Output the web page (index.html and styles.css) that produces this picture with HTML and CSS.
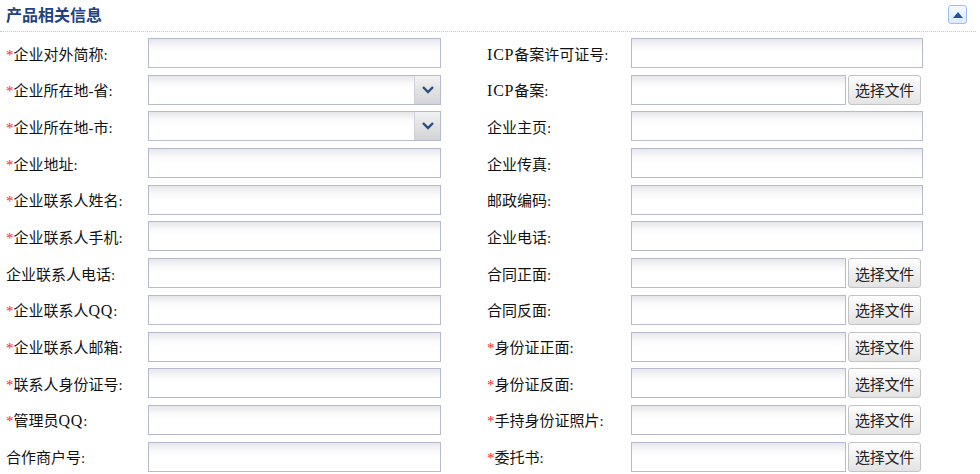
FILE: index.html
```html
<!DOCTYPE html>
<html lang="zh">
<head>
<meta charset="utf-8">
<link rel="stylesheet" href="styles.css">
</head>
<body>
<div class="panel">
  <div class="head">
    <span class="title">产品相关信息</span>
    <span class="toggle"><svg width="10" height="6" viewBox="0 0 10 6"><path d="M0 6 L5 0 L10 6 Z" fill="#1f55a8"/></svg></span>
  </div>
  <div class="form">
    <div class="cell"><label><i>*</i>企业对外简称:</label><div class="field"><span class="inp"></span></div></div>
    <div class="cell r"><label><b class="lat">ICP</b>备案许可证号:</label><div class="field"><span class="inp"></span></div></div>

    <div class="cell"><label><i>*</i>企业所在地-省:</label><div class="field"><span class="inp sel"><span class="arrow"><svg width="12" height="8" viewBox="0 0 12 8"><path d="M1 1 L6 6 L11 1" fill="none" stroke="#284d80" stroke-width="2.4"/></svg></span></span></div></div>
    <div class="cell r"><label><b class="lat">ICP</b>备案:</label><div class="field"><span class="inp file"></span><span class="btn">选择文件</span></div></div>

    <div class="cell"><label><i>*</i>企业所在地-市:</label><div class="field"><span class="inp sel"><span class="arrow"><svg width="12" height="8" viewBox="0 0 12 8"><path d="M1 1 L6 6 L11 1" fill="none" stroke="#284d80" stroke-width="2.4"/></svg></span></span></div></div>
    <div class="cell r"><label>企业主页:</label><div class="field"><span class="inp"></span></div></div>

    <div class="cell"><label><i>*</i>企业地址:</label><div class="field"><span class="inp"></span></div></div>
    <div class="cell r"><label>企业传真:</label><div class="field"><span class="inp"></span></div></div>

    <div class="cell"><label><i>*</i>企业联系人姓名:</label><div class="field"><span class="inp"></span></div></div>
    <div class="cell r"><label>邮政编码:</label><div class="field"><span class="inp"></span></div></div>

    <div class="cell"><label><i>*</i>企业联系人手机:</label><div class="field"><span class="inp"></span></div></div>
    <div class="cell r"><label>企业电话:</label><div class="field"><span class="inp"></span></div></div>

    <div class="cell"><label>企业联系人电话:</label><div class="field"><span class="inp"></span></div></div>
    <div class="cell r"><label>合同正面:</label><div class="field"><span class="inp file"></span><span class="btn">选择文件</span></div></div>

    <div class="cell"><label><i>*</i>企业联系人<b class="lat">QQ</b>:</label><div class="field"><span class="inp"></span></div></div>
    <div class="cell r"><label>合同反面:</label><div class="field"><span class="inp file"></span><span class="btn">选择文件</span></div></div>

    <div class="cell"><label><i>*</i>企业联系人邮箱:</label><div class="field"><span class="inp"></span></div></div>
    <div class="cell r"><label><i>*</i>身份证正面:</label><div class="field"><span class="inp file"></span><span class="btn">选择文件</span></div></div>

    <div class="cell"><label><i>*</i>联系人身份证号:</label><div class="field"><span class="inp"></span></div></div>
    <div class="cell r"><label><i>*</i>身份证反面:</label><div class="field"><span class="inp file"></span><span class="btn">选择文件</span></div></div>

    <div class="cell"><label><i>*</i>管理员<b class="lat">QQ</b>:</label><div class="field"><span class="inp"></span></div></div>
    <div class="cell r"><label><i>*</i>手持身份证照片:</label><div class="field"><span class="inp file"></span><span class="btn">选择文件</span></div></div>

    <div class="cell"><label>合作商户号:</label><div class="field"><span class="inp"></span></div></div>
    <div class="cell r"><label><i>*</i>委托书:</label><div class="field"><span class="inp file"></span><span class="btn">选择文件</span></div></div>
  </div>
</div>
</body>
</html>
```
FILE: styles.css
```css
html, body {
  margin: 0;
  padding: 0;
  background: #fff;
}
body {
  width: 980px;
  height: 474px;
  overflow: hidden;
  font-family: "Liberation Serif", "Noto Sans CJK SC", serif;
  font-size: 15px;
  color: #111;
}
.panel {
  width: 976px;
}
.head {
  height: 32px;
  border-bottom: 1px dotted #c8c8c8;
  display: flex;
  align-items: center;
  justify-content: space-between;
  padding: 0 9px 0 6px;
  box-sizing: border-box;
}
.title {
  font-family: "Noto Sans CJK SC", sans-serif;
  font-weight: bold;
  font-size: 16px;
  color: #22427f;
  margin-top: -3px;
}
.toggle {
  width: 19px;
  height: 19px;
  box-sizing: border-box;
  border: 1px solid #9cc0ee;
  border-radius: 3px;
  background: linear-gradient(#f4f9ff, #dcebfd);
  display: flex;
  align-items: center;
  justify-content: center;
  margin-top: -2px;
}
.form {
  display: grid;
  grid-template-columns: 481px 480px;
  row-gap: 6.7px;
  padding: 6px 0 0 6px;
}
.cell {
  display: flex;
  align-items: center;
  height: 30px;
}
.cell label {
  width: 142px;
  flex: none;
  white-space: nowrap;
}
.cell.r label {
  width: 144px;
}
.cell label i {
  font-style: normal;
  color: #f22;
  font-size: 15px;
  margin-right: 0;
}
.cell label .lat {
  font-weight: normal;
  font-size: 16px;
  letter-spacing: 0.8px;
}
.field {
  display: flex;
  align-items: center;
}
.inp {
  display: block;
  width: 293px;
  height: 30px;
  box-sizing: border-box;
  border: 1px solid #b7bacd;
  background: linear-gradient(#e6e7ec 0, #fafafb 8px, #fff 14px);
  position: relative;
}
.cell.r .inp {
  width: 292px;
}
.cell.r .inp.file {
  width: 215px;
}
.inp.sel .arrow {
  position: absolute;
  top: 0;
  right: 0;
  width: 25px;
  height: 28px;
  border-left: 1px solid #d0d2da;
  background: linear-gradient(#f2f2f2, #d2d3d6);
  display: flex;
  align-items: center;
  justify-content: center;
}
.btn {
  margin-left: 2px;
  width: 73px;
  height: 30px;
  box-sizing: border-box;
  border: 1px solid #c4c4c4;
  border-radius: 3px;
  background: linear-gradient(#fdfdfd, #e3e3e3);
  font-family: "Noto Sans CJK SC", sans-serif;
  font-size: 15px;
  color: #222;
  display: flex;
  align-items: center;
  justify-content: center;
  letter-spacing: -0.3px;
}
```
